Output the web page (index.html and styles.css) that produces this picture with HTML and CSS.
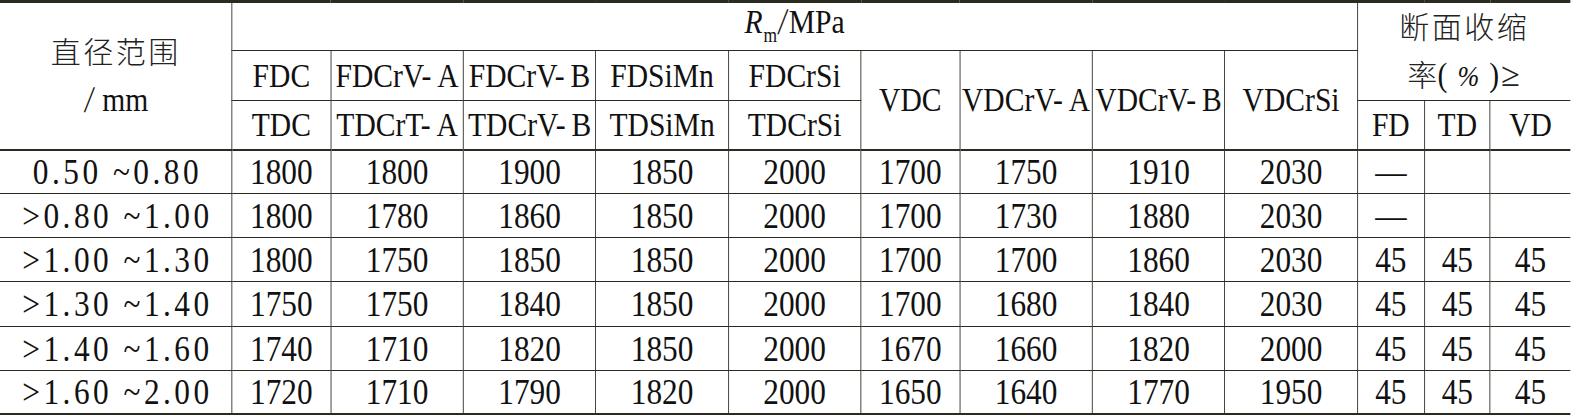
FILE: index.html
```html
<!DOCTYPE html>
<html lang="zh-CN">
<head>
    <meta charset="UTF-8">
    <meta name="viewport" content="width=device-width, initial-scale=1.0">
    <title>钢丝抗拉强度与断面收缩率</title>
    <link rel="stylesheet" href="styles.css">
</head>
<body>
    <div class="sheet">
    <table class="spec-table">
        <colgroup>
            <col class="col-dia">
            <col class="col-narrow">
            <col class="col-wide">
            <col class="col-wide">
            <col class="col-wide">
            <col class="col-wide">
            <col class="col-narrow">
            <col class="col-wide">
            <col class="col-wide">
            <col class="col-wide">
            <col class="col-fd">
            <col class="col-td">
            <col class="col-vd">
        </colgroup>
        <thead>
            <tr class="head-1">
                <td rowspan="3" class="first stack"><span class="cjk">直径范围</span><br><span class="unit">/</span> mm</td>
                <td colspan="9" class="rm"><i>R</i><span class="sub">m</span><span class="unit">/</span>MPa</td>
                <td colspan="3" rowspan="2" class="last stack-b"><span class="cjk">断面收缩</span><br><span class="cjk">率</span>( <i class="pct">%</i> )<span class="cjk ge">≥</span></td>
            </tr>
            <tr class="head-2">
                <td>FDC</td>
                <td>FDCrV-&thinsp;A</td>
                <td>FDCrV-&thinsp;B</td>
                <td>FDSiMn</td>
                <td>FDCrSi</td>
                <td rowspan="2" class="split">VDC</td>
                <td rowspan="2" class="split">VDCrV-&thinsp;A</td>
                <td rowspan="2" class="split">VDCrV-&thinsp;B</td>
                <td rowspan="2" class="split">VDCrSi</td>
            </tr>
            <tr class="head-3">
                <td>TDC</td>
                <td>TDCrT-&thinsp;A</td>
                <td>TDCrV-&thinsp;B</td>
                <td>TDSiMn</td>
                <td>TDCrSi</td>
                <td>FD</td>
                <td>TD</td>
                <td class="last">VD</td>
            </tr>
        </thead>
        <tbody>
            <tr>
                <td class="first range">0.50 ~0.80</td>
                <td>1800</td><td>1800</td><td>1900</td><td>1850</td><td>2000</td>
                <td>1700</td><td>1750</td><td>1910</td><td>2030</td>
                <td>—</td><td></td><td class="last"></td>
            </tr>
            <tr>
                <td class="first range">&gt;0.80 ~1.00</td>
                <td>1800</td><td>1780</td><td>1860</td><td>1850</td><td>2000</td>
                <td>1700</td><td>1730</td><td>1880</td><td>2030</td>
                <td>—</td><td></td><td class="last"></td>
            </tr>
            <tr>
                <td class="first range">&gt;1.00 ~1.30</td>
                <td>1800</td><td>1750</td><td>1850</td><td>1850</td><td>2000</td>
                <td>1700</td><td>1700</td><td>1860</td><td>2030</td>
                <td>45</td><td>45</td><td class="last">45</td>
            </tr>
            <tr class="tall">
                <td class="first range">&gt;1.30 ~1.40</td>
                <td>1750</td><td>1750</td><td>1840</td><td>1850</td><td>2000</td>
                <td>1700</td><td>1680</td><td>1840</td><td>2030</td>
                <td>45</td><td>45</td><td class="last">45</td>
            </tr>
            <tr>
                <td class="first range">&gt;1.40 ~1.60</td>
                <td>1740</td><td>1710</td><td>1820</td><td>1850</td><td>2000</td>
                <td>1670</td><td>1660</td><td>1820</td><td>2000</td>
                <td>45</td><td>45</td><td class="last">45</td>
            </tr>
            <tr class="short">
                <td class="first range">&gt;1.60 ~2.00</td>
                <td>1720</td><td>1710</td><td>1790</td><td>1820</td><td>2000</td>
                <td>1650</td><td>1640</td><td>1770</td><td>1950</td>
                <td>45</td><td>45</td><td class="last">45</td>
            </tr>
        </tbody>
    </table>
    </div>
</body>
</html>
```

FILE: styles.css
```css
:root {
    --line: #2b2b22;
    --ink: #111;
}

body, html {
    margin: 0;
    padding: 0;
    background: #fff;
    color: var(--ink);
    font-family: "Liberation Serif", serif;
    overflow: hidden;
}

.sheet {
    width: 1571px;
    height: 416px;
    overflow: hidden;
}

/* the print uses a condensed Times face, so the table is laid out
   wide and squeezed back to 1571px */
.spec-table {
    width: 1805px;
    table-layout: fixed;
    border-collapse: collapse;
    border-top: 3px solid var(--line);
    border-bottom: 2px solid var(--line);
    transform: scaleX(0.87);
    transform-origin: 0 0;
}

.col-dia { width: 266.5px; }
.col-narrow { width: 113.7px; }
.col-wide { width: 152.3px; }
.col-fd { width: 77px; }
.col-td { width: 75.8px; }
.col-vd { width: 91.9px; }

.spec-table td {
    border: 1px solid var(--line);
    padding: 0;
    text-align: center;
    vertical-align: middle;
    white-space: nowrap;
    overflow: visible;
    font-family: "Liberation Serif", serif;
    font-size: 34px;
    line-height: 32px;
}

.spec-table td.first { border-left: none; }
.spec-table td.last { border-right: none; }

thead tr:last-child td,
thead td.split,
thead td.first {
    border-bottom: 2px solid var(--line);
}

.head-1 { height: 49px; }
.head-2 { height: 49px; }
.head-3 { height: 49px; }

tbody tr { height: 44px; }
tbody tr.tall { height: 45px; }
tbody tr.short { height: 43px; }

.spec-table tbody td {
    font-size: 36px;
    line-height: 32px;
}

.spec-table tbody td.range {
    letter-spacing: 4px;
    padding-left: 4px;
}

.spec-table td.stack { line-height: 48px; }
.spec-table td.stack-b { line-height: 48px; }

.spec-table td.rm { padding-bottom: 2px; }

.cjk {
    display: inline-block;
    font-family: "Noto Sans CJK SC", sans-serif;
    font-weight: 300;
    font-size: 30px;
    line-height: 32px;
    letter-spacing: 2.5px;
    color: #222;
    transform: scaleX(1.15);
}

.cjk.ge {
    font-family: "Liberation Serif", "Noto Sans CJK SC", serif;
    font-size: 34px;
    letter-spacing: 0;
    margin-left: 4px;
}

.unit {
    display: inline-block;
    transform: skewX(-8deg) scaleY(1.1);
    margin: 0 2px;
}

.sub {
    font-size: 20px;
    line-height: 1;
    vertical-align: -9px;
    margin-left: 1px;
}

.pct {
    font-size: 30px;
    margin: 0 3px;
}
```
